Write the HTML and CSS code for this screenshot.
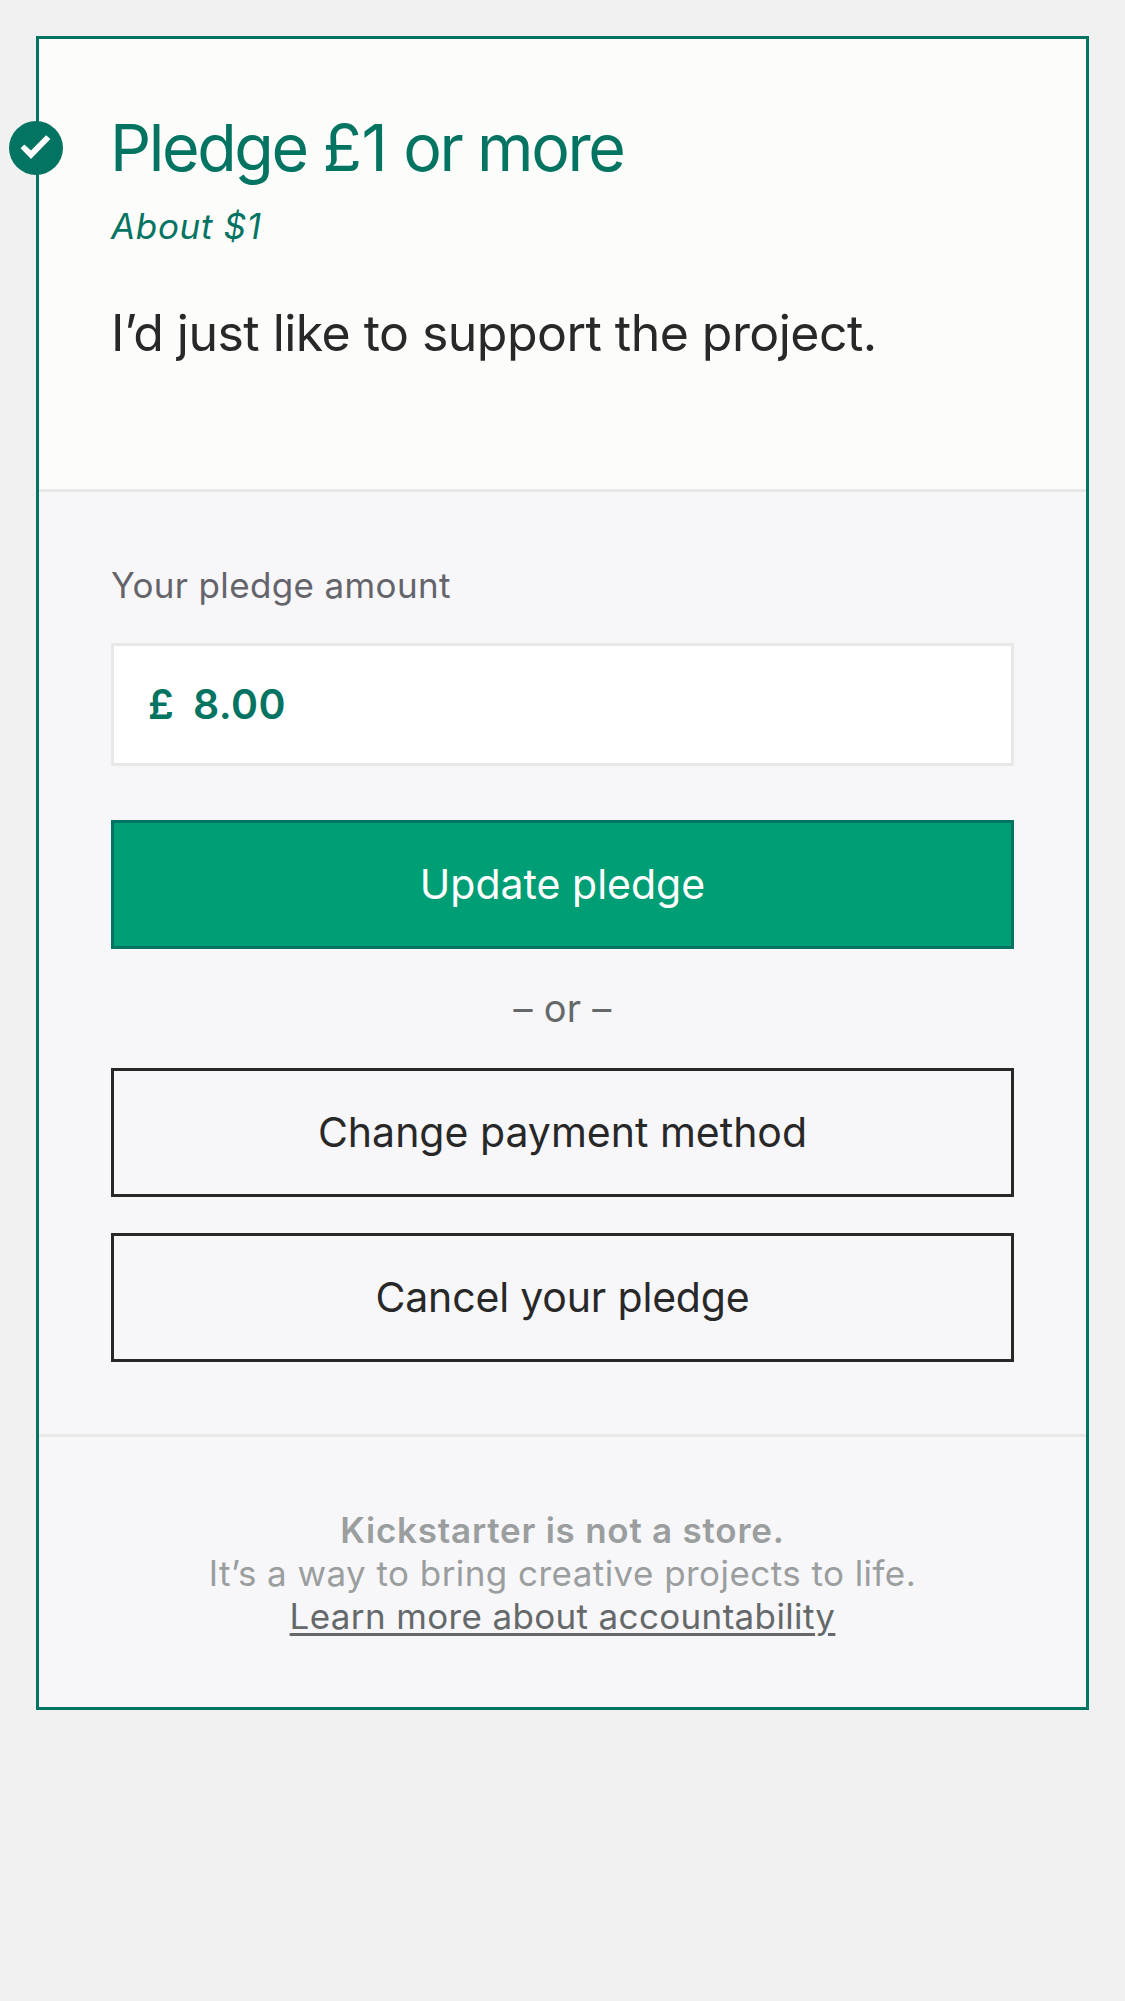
FILE: index.html
```html
<!DOCTYPE html>
<html lang="en">
<head>
<meta charset="utf-8">
<title>Manage your pledge</title>
<link rel="stylesheet" href="styles.css">
</head>
<body>
<main class="card">
  <svg class="badge" viewBox="0 0 54 54" aria-hidden="true">
    <circle cx="27" cy="27" r="27" fill="#037362"/>
    <path d="M11.6 27.3 15.3 23.4 22 29.6 37.1 14.2 41.4 18.1 22 37.9Z" fill="#fff"/>
  </svg>
  <header class="reward">
    <h1 class="title">Pledge <span class="minimum">£1</span> or more</h1>
    <p class="conversion">About $1</p>
    <p class="description">I’d just like to support the project.</p>
  </header>
  <section class="manage">
    <label class="label" for="amount">Your pledge amount</label>
    <div class="field">
      <span class="currency">£</span>
      <input class="amount" id="amount" type="text" value="8.00">
    </div>
    <button class="button primary" type="button">Update pledge</button>
    <p class="or">– or –</p>
    <button class="button" type="button">Change payment method</button>
    <button class="button cancel" type="button">Cancel your pledge</button>
  </section>
  <footer class="notice">
    <strong class="store">Kickstarter is not a store.</strong>
    <p class="tagline">It’s a way to bring creative projects to life.</p>
    <a class="learn" href="#">Learn more about accountability</a>
  </footer>
</main>
</body>
</html>
```
FILE: styles.css
```css
* {
  box-sizing: border-box;
}

body {
  margin: 0;
  padding: 36px;
  background: #f1f1f1;
  color: #282828;
  font-family: Inter, "Liberation Sans", sans-serif;
}

h1,
p {
  margin: 0;
  font-weight: 400;
}

.card {
  position: relative;
  border: 3px solid #037362;
  background: #f7f7fa;
}

/* Selected marker, centred on the card's left border */
.badge {
  position: absolute;
  left: -30px;
  top: 82px;
  width: 54px;
  height: 54px;
}

.reward {
  padding: 72px 72px 120px;
  border-bottom: 3px solid #e8e8e8;
  background: #fcfcfa;
}

.title {
  margin-left: -1px;
  color: #037362;
  font-size: 64.5px;
  line-height: 74px;
  letter-spacing: -2.4px;
}

.minimum {
  letter-spacing: -0.3px;
}

.conversion {
  margin-top: 20px;
  color: #037362;
  font-size: 35px;
  font-style: italic;
  line-height: 42px;
  letter-spacing: 0.66px;
}

.description {
  margin-top: 50px;
  font-size: 50px;
  line-height: 72px;
  letter-spacing: -0.54px;
}

.manage {
  display: flex;
  flex-direction: column;
  padding: 72px;
  border-bottom: 3px solid #e8e8e8;
}

.label {
  color: #64646a;
  font-size: 35px;
  line-height: 43px;
  letter-spacing: 0.36px;
}

.field {
  display: flex;
  height: 123px;
  margin: 36px 0 54px;
  padding-left: 34px;
  border: 3px solid #e8e8e8;
  background: #fff;
  color: #037362;
  font-size: 41px;
  font-weight: 600;
  line-height: 117px;
}

.currency {
  width: 45px;
}

.amount {
  flex: 1;
  min-width: 0;
  height: 117px;
  padding: 0;
  border: 0;
  outline: 0;
  background: none;
  color: inherit;
  font: inherit;
  letter-spacing: 0.39px;
}

.button {
  height: 129px;
  padding: 0;
  border: 3px solid #282828;
  border-radius: 0;
  background: none;
  color: #282828;
  font: 400 41px/123px Inter, "Liberation Sans", sans-serif;
}

.primary {
  border-color: #037362;
  background: #009e74;
  color: #fff;
}

.cancel {
  margin-top: 36px;
  letter-spacing: -0.17px;
}

.or {
  color: #656969;
  font-size: 38px;
  line-height: 119px;
  letter-spacing: 0.25px;
  text-align: center;
}

.notice {
  display: flex;
  flex-direction: column;
  align-items: center;
  padding: 72px 72px 69px;
  color: #9b9e9e;
  font-size: 35px;
  line-height: 43px;
  letter-spacing: 0.44px;
}

.store {
  font-weight: 600;
  letter-spacing: 0.76px;
}

.learn {
  color: #656969;
  letter-spacing: 0.35px;
  text-decoration: underline;
  text-decoration-thickness: 3px;
  text-underline-offset: 4px;
}
```
